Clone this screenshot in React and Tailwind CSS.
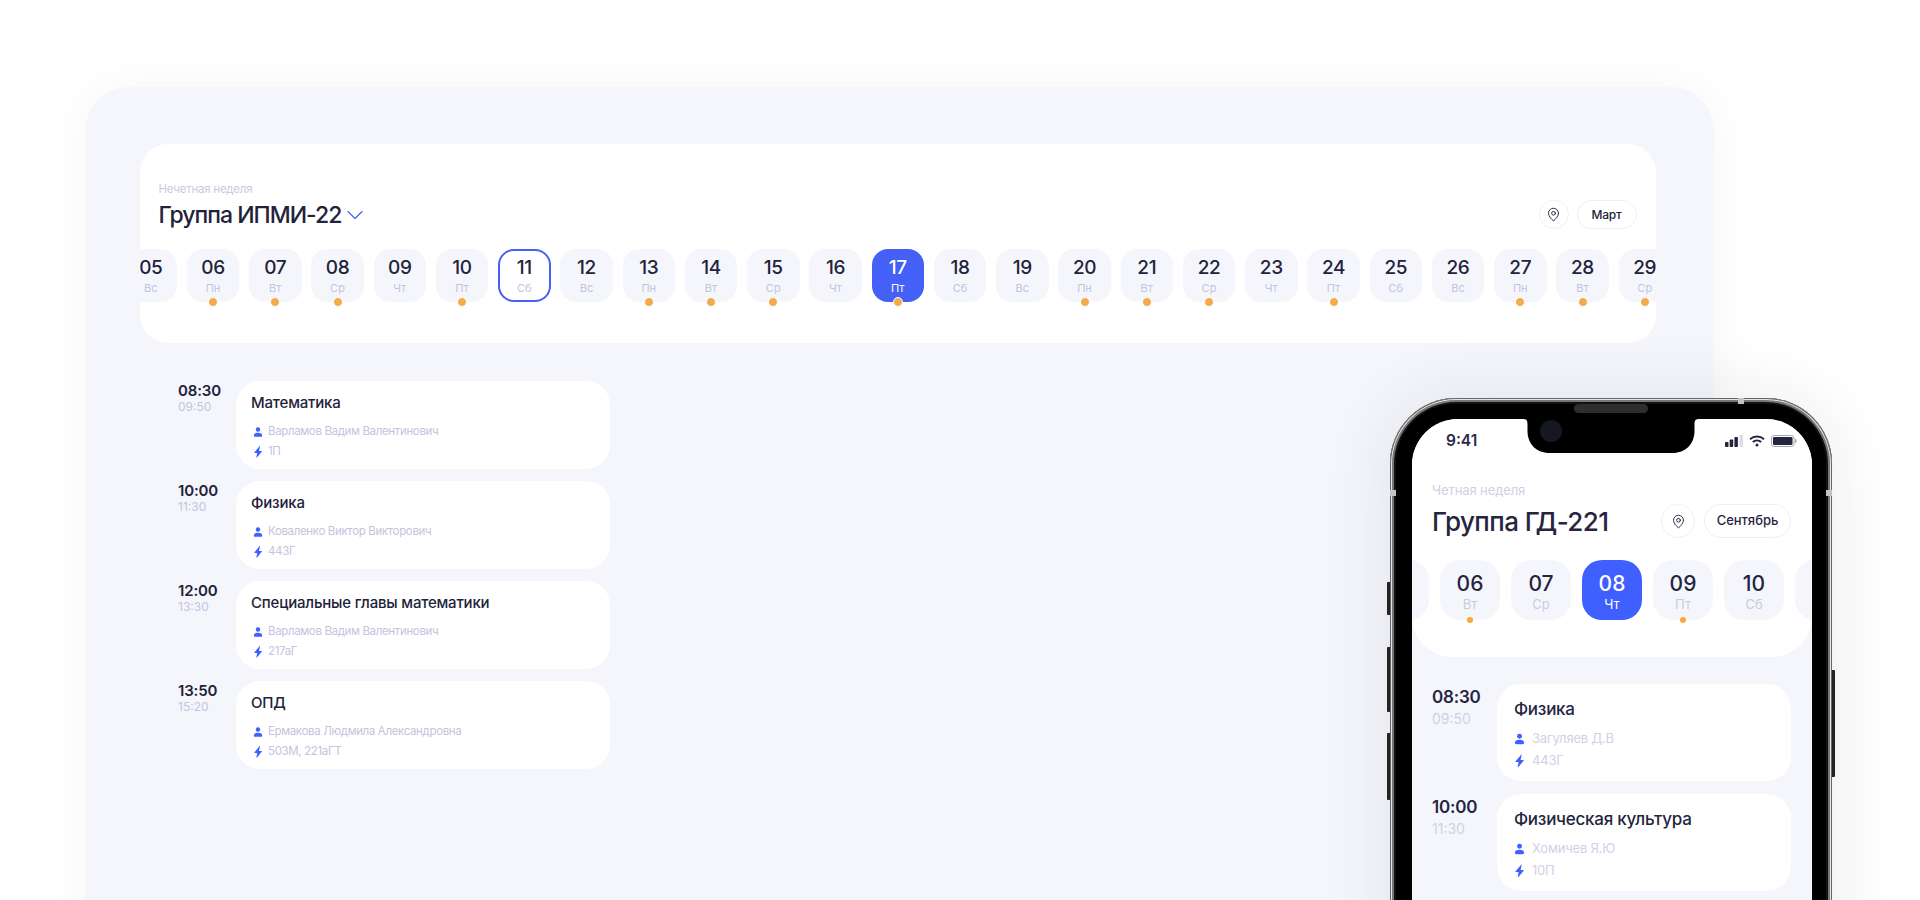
import React from 'react';
import { ChevronDown, MapPin } from 'lucide-react';

const DAY_NAMES = ['Вс', 'Пн', 'Вт', 'Ср', 'Чт', 'Пт', 'Сб'];

// 05 марта = Вс, точки только у дней с парами
const DESKTOP_DAYS = Array.from({ length: 25 }, (_, i) => {
  const num = i + 5;
  return {
    num: String(num).padStart(2, '0'),
    name: DAY_NAMES[i % 7],
    dot: [6, 7, 8, 10, 13, 14, 15, 17, 20, 21, 22, 24, 27, 28, 29].includes(num),
  };
});

// крайние карточки уходят за экран, текста на них не видно
const PHONE_DAYS = [
  { num: '', name: '', dot: false },
  { num: '06', name: 'Вт', dot: true },
  { num: '07', name: 'Ср', dot: false },
  { num: '08', name: 'Чт', dot: false, active: true },
  { num: '09', name: 'Пт', dot: true },
  { num: '10', name: 'Сб', dot: false },
  { num: '', name: '', dot: false },
];

const LESSONS = [
  { start: '08:30', end: '09:50', title: 'Математика', teacher: 'Варламов Вадим Валентинович', room: '1П' },
  { start: '10:00', end: '11:30', title: 'Физика', teacher: 'Коваленко Виктор Викторович', room: '443Г' },
  { start: '12:00', end: '13:30', title: 'Специальные главы математики', teacher: 'Варламов Вадим Валентинович', room: '217аГ' },
  { start: '13:50', end: '15:20', title: 'ОПД', teacher: 'Ермакова Людмила Александровна', room: '503М, 221аГТ' },
];

const PHONE_LESSONS = [
  { start: '08:30', end: '09:50', title: 'Физика', teacher: 'Загуляев Д.В', room: '443Г' },
  { start: '10:00', end: '11:30', title: 'Физическая культура', teacher: 'Хомичев Я.Ю', room: '10П' },
];

const PersonIcon = ({ className }) => (
  <svg viewBox="0 0 12 12" className={className} fill="#3f5fff">
    <circle cx="6" cy="3" r="2.7" />
    <path d="M1 10.2C1 8 2.8 6.8 6 6.8s5 1.2 5 3.4c0 1-.5 1.5-1.4 1.500H2.400C1.500 11.700 1 11.200 1 10.200z" />
  </svg>
);

const BoltIcon = ({ className }) => (
  <svg viewBox="0 0 12 14" className={className} fill="#3f5fff">
    <path d="M7.600.500 1.700 7.300c-.3.400-.1.900.4.900h2.900l-.9 4.900c-.1.500.4.700.7.400l5.700-6.800c.3-.4.100-.9-.4-.9H7.200l1.200-5.500c.1-.5-.5-.7-.8-.3z" />
  </svg>
);

const DesktopDay = ({ day }) => (
  <div
    className={`relative flex h-[53px] w-[52.5px] shrink-0 flex-col items-center rounded-[16px] pt-[7px] ${
      day.num === '17'
        ? 'bg-[#4460f7]'
        : day.num === '11'
          ? 'bg-white shadow-[inset_0_0_0_2px_#4460f7]'
          : 'bg-[#f5f6fb]'
    }`}
  >
    <span className={`text-[19px] leading-[24px] font-medium tracking-[-0.4px] ${day.num === '17' ? 'text-white' : 'text-[#22223b]'}`}>
      {day.num}
    </span>
    <span className={`mt-[1px] text-[11px] leading-[14px] ${day.num === '17' ? 'text-white' : 'text-[#c3c4de]'}`}>
      {day.name}
    </span>
    {day.dot && (
      <span className="absolute bottom-[-5px] left-1/2 h-[10px] w-[10px] -translate-x-1/2 rounded-full border-[1.5px] border-white bg-[#f2ac4e]" />
    )}
  </div>
);

const PhoneDay = ({ day }) => (
  <div
    className={`relative flex h-[60px] w-[60px] shrink-0 flex-col items-center rounded-[20px] pt-[12px] ${
      day.active ? 'bg-[#3f5fff]' : 'bg-[#f5f6fb]'
    }`}
  >
    <span className={`text-[21px] leading-[24px] font-medium ${day.active ? 'text-white' : 'text-[#25253f]'}`}>
      {day.num}
    </span>
    <span className={`text-[13px] leading-[16px] ${day.active ? 'text-white' : 'text-[#c9cae2]'}`}>
      {day.name}
    </span>
    {day.dot && (
      <span className="absolute bottom-[-3px] left-1/2 h-[6px] w-[6px] -translate-x-1/2 rounded-full bg-[#f8a83c]" />
    )}
  </div>
);

const LessonRow = ({ lesson }) => (
  <div className="flex h-[88px]">
    <div className="w-[58px] shrink-0">
      <div className="text-[15px] leading-[19px] font-semibold tracking-[-0.15px] text-[#22223b]">{lesson.start}</div>
      <div className="text-[12px] leading-[14px] text-[#c3c4de]">{lesson.end}</div>
    </div>
    <div className="h-full w-[374px] rounded-[24px] bg-white pt-[12px] pl-[15px]">
      <div className="text-[15px] leading-[20px] font-medium tracking-[-0.2px] text-[#22223b]">{lesson.title}</div>
      <div className="mt-[11px] flex h-[15px] items-center gap-[5px] text-[11.5px] tracking-[-0.35px] text-[#c3c4de]">
        <PersonIcon className="ml-[2px] h-[10px] w-[10px]" />
        {lesson.teacher}
      </div>
      <div className="mt-[5px] flex h-[15px] items-center gap-[5px] text-[11.5px] tracking-[-0.35px] text-[#c3c4de]">
        <BoltIcon className="ml-[2px] h-[12px] w-[10px]" />
        {lesson.room}
      </div>
    </div>
  </div>
);

const PhoneLessonRow = ({ lesson }) => (
  <div className="flex h-[97px]">
    <div className="w-[65px] shrink-0 pt-[2px]">
      <div className="text-[17px] leading-[22px] font-semibold tracking-[-0.2px] text-[#25253f]">{lesson.start}</div>
      <div className="mt-[2px] text-[14px] leading-[18px] text-[#d0d1e6]">{lesson.end}</div>
    </div>
    <div className="h-full w-[294px] rounded-[24px] bg-white pt-[13px] pl-[17px]">
      <div className="text-[17px] leading-[24px] font-medium tracking-[-0.25px] text-[#25253f]">{lesson.title}</div>
      <div className="mt-[9px] flex h-[18px] items-center gap-[7px] text-[13px] tracking-[-0.2px] text-[#d0d1e6]">
        <PersonIcon className="h-[12px] w-[11px]" />
        {lesson.teacher}
      </div>
      <div className="mt-[4px] flex h-[18px] items-center gap-[7px] text-[13px] tracking-[-0.2px] text-[#d0d1e6]">
        <BoltIcon className="h-[14px] w-[11px]" />
        {lesson.room}
      </div>
    </div>
  </div>
);

const Phone = () => (
  <div className="absolute top-[398px] left-[1390px] h-[620px] w-[442px] rounded-[66px] bg-black pt-[21px] pl-[22px] shadow-[0_0_70px_rgba(30,30,70,0.09),inset_0_0_0_1px_#666,inset_0_0_0_2px_#e4e4e4,inset_0_0_0_4px_#777,inset_0_0_0_6px_#111]">
    {/* боковые кнопки */}
    <div className="absolute top-[184px] left-[-3px] h-[33px] w-[3px] rounded-l-[1px] bg-[#222]" />
    <div className="absolute top-[249px] left-[-3px] h-[65px] w-[3px] rounded-l-[1px] bg-[#222]" />
    <div className="absolute top-[335px] left-[-3px] h-[67px] w-[3px] rounded-l-[1px] bg-[#222]" />
    <div className="absolute top-[272px] right-[-3px] h-[107px] w-[3px] rounded-r-[1px] bg-[#222]" />
    {/* антенны */}
    <div className="absolute top-[92px] left-0 h-[6px] w-[6px] bg-[#c4c4c4]" />
    <div className="absolute top-[92px] right-0 h-[6px] w-[6px] bg-[#c4c4c4]" />
    <div className="absolute top-0 left-[348px] h-[6px] w-[6px] bg-[#c4c4c4]" />
    {/* динамик */}
    <div className="absolute top-[6px] left-[184px] h-[9px] w-[74px] rounded-full bg-[#2e2e2e]" />

    <div className="relative h-[599px] w-[400px] overflow-hidden rounded-t-[46px] bg-[#f5f6fb]">
      {/* вырез */}
      <svg viewBox="0 0 176 34" className="absolute top-0 left-[111px] z-10 h-[34px] w-[176px]" fill="#000">
        <path d="M0 0h176c-4 0-4.500 2-4.500 6v6c0 13-9 22-22 22H26.500c-13 0-22-9-22-22V6C4.500 2 4 0 0 0z" />
        <circle cx="28" cy="12" r="11" fill="#16181f" />
      </svg>

      <div className="h-[238px] rounded-b-[40px] bg-white">
        <div className="flex h-[44px] justify-between pt-[12px] pr-[15px] pl-[34px]">
          <span className="text-[15.5px] leading-[20px] font-semibold text-[#2b2b45]">9:41</span>
          <div className="flex h-[20px] items-center gap-[6px]">
            <svg viewBox="0 0 18 12" className="h-[12px] w-[18px]" fill="#25253f">
              <rect x="0" y="7" width="3.500" height="5" rx="0.8" />
              <rect x="4.700" y="4.500" width="3.500" height="7.500" rx="0.8" />
              <rect x="9.400" y="2" width="3.500" height="10" rx="0.8" />
              <rect x="14.500" y="0" width="3.500" height="12" rx="0.8" fill="#dcdce6" />
            </svg>
            <svg viewBox="0 0 16 12" className="h-[12px] w-[16px]" fill="none" stroke="#25253f" strokeWidth="2">
              <path d="M1 4.200c4-3.600 10-3.600 14 0" />
              <path d="M3.800 7c2.400-2.100 6-2.100 8.400 0" />
              <circle cx="8" cy="10" r="1.500" fill="#25253f" stroke="none" />
            </svg>
            <svg viewBox="0 0 26 12" className="h-[12px] w-[26px]">
              <rect x="0.500" y="0.500" width="22.500" height="11" rx="2.500" fill="none" stroke="#a9a9b5" />
              <rect x="2" y="2" width="19.500" height="8" rx="1.300" fill="#25253f" />
              <rect x="24" y="4" width="1.500" height="4" rx="0.700" fill="#a9a9b5" />
            </svg>
          </div>
        </div>

        <div className="px-5 pt-[19px]">
          <div className="text-[13px] leading-[16px] tracking-[-0.1px] text-[#d0d1e6]">Четная неделя</div>
          <div className="mt-[6px] flex h-[34px] items-center">
            <h2 className="flex-1 pt-[1px] text-[26px] leading-[34px] font-medium tracking-[-0.6px] text-[#25253f]">Группа ГД-221</h2>
            <div className="flex h-[34px] w-[34px] items-center justify-center rounded-full border border-[#eff0f6]">
              <MapPin size={15} strokeWidth={1.5} className="text-[#25253f]" />
            </div>
            <div className="mr-[1px] ml-[9px] flex h-[34px] w-[87px] items-center justify-center rounded-full border border-[#eff0f6] text-[13px] font-medium text-[#25253f]">
              Сентябрь
            </div>
          </div>
        </div>

        <div className="mt-[22px] ml-[-43px] flex gap-[11px]">
          {PHONE_DAYS.map((day, index) => (
            <PhoneDay key={index} day={day} />
          ))}
        </div>
      </div>

      <div className="flex flex-col gap-[13px] pt-[27px] pl-5">
        {PHONE_LESSONS.map(lesson => (
          <PhoneLessonRow key={lesson.start} lesson={lesson} />
        ))}
      </div>
    </div>
  </div>
);

const App = () => {
  return (
    <div className="relative h-[900px] w-[1920px] overflow-hidden bg-white font-['Inter',sans-serif]">
      <div className="pt-[87px] pl-[85px]">
        <div className="h-[900px] w-[1629px] rounded-[44px] bg-[#f5f6fb] pt-[57px] pl-[54.500px] shadow-[0_0_50px_rgba(0,0,0,0.04)]">
          <div className="h-[199px] w-[1516px] overflow-hidden rounded-[28px] bg-white">
            <div className="flex items-end pt-[38px] pr-[19px] pl-[19px]">
              <div className="flex-1">
                <div className="text-[11.5px] leading-[15px] tracking-[-0.25px] text-[#c9cae2]">Нечетная неделя</div>
                <div className="mt-[2px] flex h-[32px] items-center">
                  <h1 className="text-[23px] leading-[32px] font-medium tracking-[-1px] text-[#22223b]">Группа ИПМИ-22</h1>
                  <ChevronDown size={28} strokeWidth={1} className="text-[#4460f7]" />
                </div>
              </div>
              <div className="flex items-center gap-[8px] pb-[2px]">
                <div className="flex h-[29px] w-[30px] items-center justify-center rounded-full border border-[#eff0f6]">
                  <MapPin size={15} strokeWidth={1.5} className="text-[#22223b]" />
                </div>
                <div className="flex h-[29px] w-[60px] items-center justify-center rounded-full border border-[#eff0f6] text-[12px] font-medium tracking-[-0.2px] text-[#22223b]">
                  Март
                </div>
              </div>
            </div>
            <div className="mt-[18px] ml-[-15px] flex gap-[9.750px]">
              {DESKTOP_DAYS.map(day => (
                <DesktopDay key={day.num} day={day} />
              ))}
            </div>
          </div>

          <div className="flex flex-col gap-[12px] pt-[38px] pl-[38.500px]">
            {LESSONS.map(lesson => (
              <LessonRow key={lesson.start} lesson={lesson} />
            ))}
          </div>
        </div>
      </div>

      <Phone />
    </div>
  );
};

export default App;
